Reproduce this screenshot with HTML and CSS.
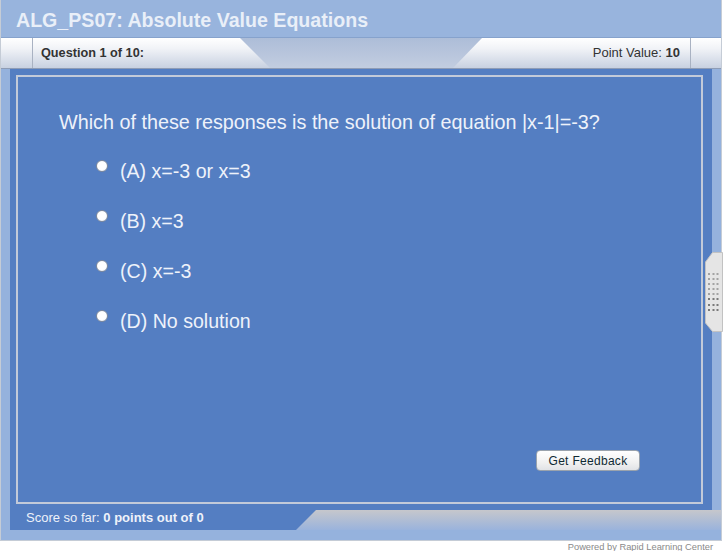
FILE: index.html
```html
<!DOCTYPE html>
<html lang="en">
<head>
    <meta charset="UTF-8">
    <title>ALG_PS07: Absolute Value Equations</title>
    <link rel="stylesheet" href="styles.css">
</head>
<body>
    <div class="frame">
        <header class="title-bar">ALG_PS07: Absolute Value Equations</header>

        <div class="tab-bar">
            <div class="tab tab-left">
                <span class="tab-cap"></span>
                <span class="tab-label"><b>Question 1 of 10:</b></span>
            </div>
            <div class="tab tab-right">
                <span class="tab-label">Point Value: <b>10</b></span>
                <span class="tab-cap"></span>
            </div>
        </div>

        <div class="main">
            <div class="side"></div>
            <div class="stage">
                <div class="question-box">
                    <p class="question">Which of these responses is the solution of equation |x-1|=-3?</p>
                    <ul class="options">
                        <li><span class="radio"></span>(A) x=-3 or x=3</li>
                        <li><span class="radio"></span>(B) x=3</li>
                        <li><span class="radio"></span>(C) x=-3</li>
                        <li><span class="radio"></span>(D) No solution</li>
                    </ul>
                    <button class="feedback" type="button">Get Feedback</button>
                </div>
            </div>
            <div class="side"></div>

            <!-- drawer grip on the right edge -->
            <svg class="handle" width="18" height="80" viewBox="0 0 18 80">
                <polygon points="7.5,0.5 17.5,0.5 17.5,79.5 7.5,79.5 0.5,71 0.5,10" fill="#e5e5e5" stroke="#c2c2c2"/>
                <g fill="#a3a3a3">
                    <rect x="3" y="21" width="2" height="2"/><rect x="7.5" y="21" width="2" height="2"/><rect x="11.5" y="21" width="2" height="2"/>
                    <rect x="3" y="26" width="2" height="2"/><rect x="7.5" y="26" width="2" height="2"/><rect x="11.5" y="26" width="2" height="2"/>
                    <rect x="3" y="31" width="2" height="2"/><rect x="7.5" y="31" width="2" height="2"/><rect x="11.5" y="31" width="2" height="2"/>
                    <rect x="3" y="36" width="2" height="2"/><rect x="7.5" y="36" width="2" height="2"/><rect x="11.5" y="36" width="2" height="2"/>
                    <rect x="3" y="41" width="2" height="2"/><rect x="7.5" y="41" width="2" height="2"/><rect x="11.5" y="41" width="2" height="2"/>
                </g>
                <g fill="#7a7a7a">
                    <rect x="3" y="46" width="2" height="2"/><rect x="7.5" y="46" width="2" height="2"/><rect x="11.5" y="46" width="2" height="2"/>
                    <rect x="3" y="52" width="2" height="2"/><rect x="7.5" y="52" width="2" height="2"/><rect x="11.5" y="52" width="2" height="2"/>
                    <rect x="3" y="57" width="2" height="2"/><rect x="7.5" y="57" width="2" height="2"/><rect x="11.5" y="57" width="2" height="2"/>
                </g>
            </svg>
        </div>

        <div class="footer">
            <div class="score">Score so far: <b>0 points out of 0</b></div>
        </div>
    </div>
    <div class="powered">Powered by Rapid Learning Center</div>
</body>
</html>
```

FILE: styles.css
```css
* {
    box-sizing: border-box;
    font-family: "Liberation Sans", Arial, sans-serif;
}
body {
    margin: 0;
    background: #ffffff;
}
.frame {
    position: relative;
    width: 722px;
    background: #95b2dd;
    border: 1px solid #c5ccd6;
    border-top: 0;
    padding-bottom: 10px;
}
.title-bar {
    height: 38px;
    padding: 4px 0 0 15px;
    line-height: 33px;
    font-size: 19.6px;
    font-weight: bold;
    color: #e9eff8;
    background: #98b4dd;
    border-bottom: 1px solid #86a2cc;
}

/* question / point value strip */
.tab-bar {
    display: flex;
    justify-content: space-between;
    height: 31px;
    background: linear-gradient(#adbdd8, #c2cde0);
    border-bottom: 1px solid #8e9cb5;
}
.tab {
    display: flex;
    height: 30px;
    line-height: 30px;
    background: linear-gradient(#ffffff 0%, #f1f3f7 35%, #c8d1e1 100%);
    color: #333333;
}
.tab-left {
    width: 270px;
    font-size: 12.7px;
    clip-path: polygon(0 0, 239px 0, 269px 100%, 0 100%);
}
.tab-left .tab-cap {
    width: 32px;
    border-right: 1px solid #a9b2c2;
}
.tab-left .tab-label {
    padding-left: 8px;
}
.tab-right {
    width: 268px;
    justify-content: flex-end;
    font-size: 13px;
    clip-path: polygon(29px 0, 100% 0, 100% 100%, 0 100%);
}
.tab-right .tab-label {
    padding-right: 10px;
}
.tab-right .tab-cap {
    width: 31px;
    border-left: 1px solid #a9b2c2;
}

/* main area */
.main {
    position: relative;
    display: flex;
    height: 441px;
}
.side {
    width: 9px;
}
.stage {
    width: 702px;
    padding: 6px 9px 6px 6px;
    background: #547ec2;
}
.question-box {
    display: flex;
    flex-direction: column;
    height: 100%;
    border: 2px solid #c2cad9;
    padding-top: 33px;
    color: #eef2fa;
}
.question {
    margin: 0;
    padding-left: 41px;
    font-size: 19.8px;
    line-height: 24px;
}
.options {
    display: flex;
    flex-direction: column;
    gap: 26px;
    list-style: none;
    margin: 25px 0 0;
    padding: 0 0 0 78px;
}
.options li {
    display: flex;
    align-items: flex-start;
    gap: 12px;
    font-size: 19.6px;
    line-height: 24px;
}
.radio {
    width: 12px;
    height: 12px;
    margin-top: 1px;
    border-radius: 50%;
    border: 1px solid #7f8a9c;
    background: radial-gradient(circle at 45% 40%, #ffffff 55%, #e2e6ec 100%);
}
.feedback {
    align-self: flex-end;
    margin: auto 61px 31px 0;
    width: 104px;
    height: 21px;
    padding: 0;
    border: 1px solid #9aa3ad;
    border-radius: 4px;
    background: linear-gradient(#ffffff, #f1f1f1 60%, #e1e3e6);
    font-size: 12px;
    line-height: 18px;
    letter-spacing: 0.3px;
    color: #0f2a33;
}
.handle {
    position: absolute;
    top: 183px;
    right: -2px;
}

/* score strip */
.footer {
    height: 20px;
    background: linear-gradient(#c6c7cc, #9ab3dc);
}
.score {
    width: 316px;
    height: 20px;
    border-left: 9px solid #95b2dd;
    padding-left: 16px;
    background: #547ec2;
    clip-path: polygon(0 0, 315px 0, 295px 100%, 0 100%);
    font-size: 13px;
    line-height: 16px;
    color: #eef2fa;
}
.powered {
    width: 722px;
    padding: 1px 9px 0 0;
    text-align: right;
    font-size: 9.3px;
    line-height: 11px;
    color: #8a8a8a;
}
```
